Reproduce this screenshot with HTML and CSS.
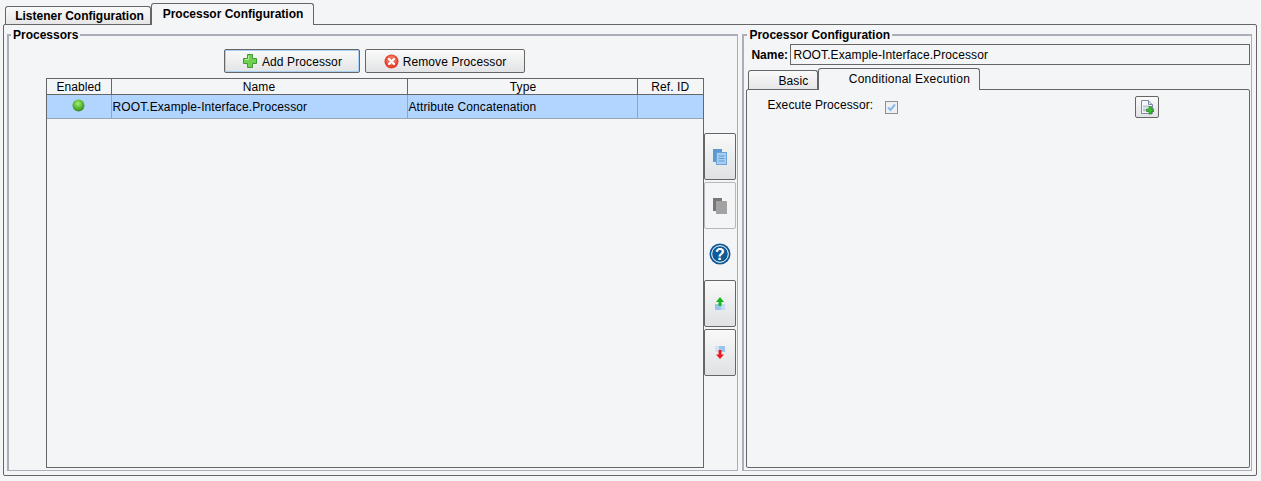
FILE: index.html
```html
<!DOCTYPE html>
<html lang="en">
<head>
<meta charset="utf-8">
<title>Processor Configuration</title>
<link rel="stylesheet" href="styles.css">
</head>
<body>
<div class="app">
  <div class="tabs">
    <div class="tab tab-outer tab-listener">Listener Configuration</div>
    <div class="tab tab-outer active">Processor Configuration</div>
  </div>
  <div class="pane">
    <fieldset class="group group-left">
      <legend>Processors</legend>
      <div class="left-body">
        <div class="table-col">
          <div class="toolbar">
            <button class="btn btn-add focused" type="button">
              <svg class="ico" width="16" height="16" viewBox="0 0 16 16"><path d="M5.500 1.500h5v4h4v5h-4v4h-5v-4h-4v-5h4z" fill="#6fd14f" stroke="#3d9a35"/><path d="M6.500 3v3.500H3" fill="none" stroke="#b5f0a0"/></svg>
              <span class="btn-text">Add Processor</span>
            </button>
            <button class="btn btn-remove" type="button">
              <svg class="ico" width="15" height="15" viewBox="0 0 15 15"><circle cx="7.500" cy="7.500" r="7" fill="#e5432c"/><circle cx="7.500" cy="6.500" r="5" fill="#f0705a"/><path d="M5 5l5 5M10 5l-5 5" stroke="#fff" stroke-width="2.200" stroke-linecap="round"/></svg>
              <span class="btn-text">Remove Processor</span>
            </button>
          </div>
          <div class="table-wrap">
            <table class="grid">
              <colgroup>
                <col class="c-enabled"><col class="c-name"><col class="c-type"><col class="c-ref">
              </colgroup>
              <thead>
                <tr><th>Enabled</th><th>Name</th><th class="th-type">Type</th><th>Ref. ID</th></tr>
              </thead>
              <tbody>
                <tr class="selected">
                  <td class="center"><svg class="dot" width="13" height="13" viewBox="0 0 13 13"><defs><radialGradient id="g" cx="45%" cy="35%" r="65%"><stop offset="0" stop-color="#a6ee7c"/><stop offset="0.6" stop-color="#55b62e"/><stop offset="1" stop-color="#3b8a22"/></radialGradient></defs><circle cx="6.500" cy="6.500" r="6" fill="url(#g)"/></svg></td>
                  <td>ROOT.Example-Interface.Processor</td>
                  <td>Attribute Concatenation</td>
                  <td></td>
                </tr>
              </tbody>
            </table>
          </div>
        </div>
        <div class="side">
          <button class="side-btn" type="button">
            <svg width="14" height="16" viewBox="0 0 14 16"><rect x=".5" y=".5" width="8" height="12" fill="#5a9bd5" stroke="#5f97cc"/><rect x="3.500" y="3.500" width="10" height="12" fill="#a9cdee" stroke="#6aa3d8"/><path d="M5.500 7h6M5.500 9.500h6M5.500 12h6" stroke="#5f9ad2"/></svg>
          </button>
          <button class="side-btn disabled" type="button" disabled>
            <svg width="14" height="16" viewBox="0 0 14 16"><rect x="0" y="0" width="9" height="13" fill="#777"/><rect x="3" y="3" width="11" height="13" fill="#a2a2a2"/></svg>
          </button>
          <div class="help">
            <svg width="22" height="22" viewBox="0 0 22 22"><circle cx="11" cy="11" r="10.500" fill="#0f5a96"/><circle cx="11" cy="11" r="8.300" fill="none" stroke="#fff" stroke-width="1"/><text x="11" y="16.500" class="help-q">?</text></svg>
          </div>
          <button class="side-btn" type="button">
            <svg width="10" height="13" viewBox="0 0 10 13"><rect x="0" y="7" width="10" height="6" fill="#9cc4ea"/><rect x="6" y="7" width="4" height="6" fill="#c4dcf2"/><path d="M5 0l4 5H6.500v4h-3V5H1z" fill="#18b820"/></svg>
          </button>
          <button class="side-btn" type="button">
            <svg width="10" height="13" viewBox="0 0 10 13"><rect x="0" y="0" width="10" height="6" fill="#9cc4ea"/><rect x="0" y="0" width="4" height="6" fill="#d0e2f4"/><path d="M3.500 4h3v4.500H9L5 13 1 8.500h2.500z" fill="#f01820"/></svg>
          </button>
        </div>
      </div>
    </fieldset>
    <fieldset class="group group-right">
      <legend>Processor Configuration</legend>
      <div class="name-row">
        <label class="name-label" for="pname">Name:</label>
        <input class="name-input" id="pname" type="text" value="ROOT.Example-Interface.Processor">
      </div>
      <div class="tabs tabs-inner">
        <div class="tab tab-basic">Basic</div>
        <div class="tab tab-cond active">Conditional Execution</div>
      </div>
      <div class="inner-pane">
        <span class="exec-label">Execute Processor:</span>
        <span class="check"><svg width="11" height="11" viewBox="0 0 11 11"><path d="M2 5.500l2.500 2.500L9 2.500" fill="none" stroke="#88b8e8" stroke-width="2"/></svg></span>
        <button class="mini-btn" type="button">
          <svg width="14" height="16" viewBox="0 0 14 16"><path d="M1.500 1.500h7l4 4v9h-11z" fill="#f4f6fa" stroke="#7d8ba8"/><path d="M8.500 1.500v4h4" fill="#cdd6e6" stroke="#7d8ba8"/><path d="M3 6.500h6v2H3zM3 9.500h3v3H3z" fill="#b9c6de"/><path d="M9 7.500h2.500V10H14v2.500h-2.500V15H9v-2.500H6.500V10H9z" fill="#3cc22c" stroke="#1c7a1c" stroke-width=".7"/></svg>
        </button>
      </div>
    </fieldset>
  </div>
</div>
</body>
</html>
```

FILE: styles.css
```css
* { box-sizing: border-box; }
html, body { margin: 0; height: 100%; }
body {
  background: #f4f5f7;
  color: #000;
  font: 12px "Liberation Sans", Arial, sans-serif;
  letter-spacing: .1px;
  overflow: hidden;
}
.app { padding: 3px 4px 0 3px; }
.tabs { display: flex; align-items: flex-end; height: 21px; padding-left: 2px; }
.tab {
  border: 1px solid #666;
  border-bottom: 0;
  border-radius: 3px 3px 0 0;
  background: linear-gradient(#fafafa, #e6e6e6);
  text-align: center;
}
.tab.active {
  background: #f4f5f7;
  position: relative;
  z-index: 1;
  margin-bottom: -1px;
}
.tab-outer { width: 146px; height: 18px; font-weight: bold; line-height: 18px; letter-spacing: 0; }
.tab-listener { padding-left: 3px; }
.tab-outer.active { width: 163px; height: 22px; line-height: 21px; padding-left: 1px; }
.pane {
  display: flex;
  gap: 4px;
  height: 452px;
  border: 1px solid #666;
  border-radius: 2px;
  padding: 3px 4px 4px 3px;
}
.group {
  margin: 0;
  min-width: 0;
  border: 1px solid #abadb8;
  border-width: 2px 1px 1px 2px;
  padding: 0;
}
.group legend {
  font-weight: bold;
  padding: 0 2px 0 2px;
  margin-left: 2px;
  line-height: 14px;
  letter-spacing: 0;
}
.group-left { width: 732px; }
.group-right { width: 510px; }
.group-right legend { margin-left: 3px; }
.left-body { display: flex; padding: 7px 0 0 37px; }
.table-col { width: 658px; }
.toolbar { display: flex; justify-content: center; gap: 5px; height: 24px; padding-right: 1px; }
.btn {
  display: flex;
  align-items: center;
  justify-content: center;
  gap: 4px;
  height: 24px;
  padding: 0;
  border: 1px solid #666;
  border-radius: 2px;
  background: linear-gradient(#fafafa, #e2e3e5);
  font: inherit;
  letter-spacing: inherit;
  color: #000;
}
.btn-text { padding-top: 2px; line-height: 15px; }
.btn-add { width: 136px; }
.btn-remove { width: 160px; }
.focused { box-shadow: inset 0 0 0 1px #a9d0f5; }
.table-wrap {
  margin-top: 5px;
  height: 390px;
  border: 1px solid #666;
}
.grid { width: 656px; border-collapse: collapse; table-layout: fixed; }
.c-enabled { width: 64px; }
.c-name { width: 296px; }
.c-type { width: 230px; }
.c-ref { width: 66px; }
.grid th {
  height: 15px;
  padding: 1px 0 0;
  font-weight: normal;
  border-right: 1px solid #666;
  border-bottom: 1px solid #666;
  line-height: 14px;
}
.grid th.th-type { padding-left: 2px; }
.grid th:last-child { border-right: 0; }
.grid td {
  height: 24px;
  padding: 0 0 0 1px;
  border-right: 1px solid #9aa5b4;
  border-bottom: 1px solid #9aa5b4;
  background: #b1d5ff;
}
.grid td:last-child { border-right: 0; }
.grid td.center { text-align: center; padding: 0; }
.dot { display: block; margin: -3px auto 0; }
.side {
  display: flex;
  flex-direction: column;
  width: 32px;
  padding-top: 84px;
}
.side-btn {
  display: flex;
  align-items: center;
  justify-content: center;
  width: 32px;
  height: 47px;
  padding: 0;
  margin-bottom: 2px;
  border: 1px solid #666;
  border-radius: 2px;
  background: linear-gradient(#f9f9f9, #dfe1e3);
}
.side-btn.disabled { border-color: #b8b8bc; background: #f4f5f7; }
.help {
  display: flex;
  justify-content: center;
  align-items: center;
  height: 49px;
  padding-bottom: 4px;
}
.help-q {
  font: bold 16px "Liberation Sans", Arial, sans-serif;
  fill: #fff;
  text-anchor: middle;
}
.name-row { display: flex; align-items: center; gap: 1px; height: 21px; margin-top: 2px; padding-left: 7px; }
.name-label { font-weight: bold; width: 38px; letter-spacing: 0; }
.name-input {
  width: 460px;
  height: 21px;
  border: 1px solid #666;
  background: #f4f5f7;
  padding: 0 2px;
  font: inherit;
  letter-spacing: inherit;
  color: #000;
  outline: 0;
}
.tabs-inner { margin-top: 3px; padding-left: 4px; height: 21px; }
.tab-basic { width: 70px; height: 19px; line-height: 20px; padding-left: 29px; text-align: left; }
.tab-cond { width: 162px; height: 22px; line-height: 21px; padding-left: 20px; letter-spacing: .25px; }
.inner-pane {
  position: relative;
  height: 379px;
  width: 504px;
  margin-left: 2px;
  border: 1px solid #666;
  border-radius: 2px;
}
.exec-label { position: absolute; left: 20px; top: 8px; }
.check {
  position: absolute;
  left: 138px;
  top: 11px;
  width: 13px;
  height: 13px;
  border: 1px solid #8a8f98;
  background: #eef0f3;
  display: flex;
  align-items: center;
  justify-content: center;
}
.mini-btn {
  position: absolute;
  left: 388px;
  top: 6px;
  width: 24px;
  height: 22px;
  padding: 0;
  display: flex;
  align-items: center;
  justify-content: center;
  border: 1px solid #666;
  border-radius: 2px;
  background: linear-gradient(#fafafa, #e2e3e5);
}
```
